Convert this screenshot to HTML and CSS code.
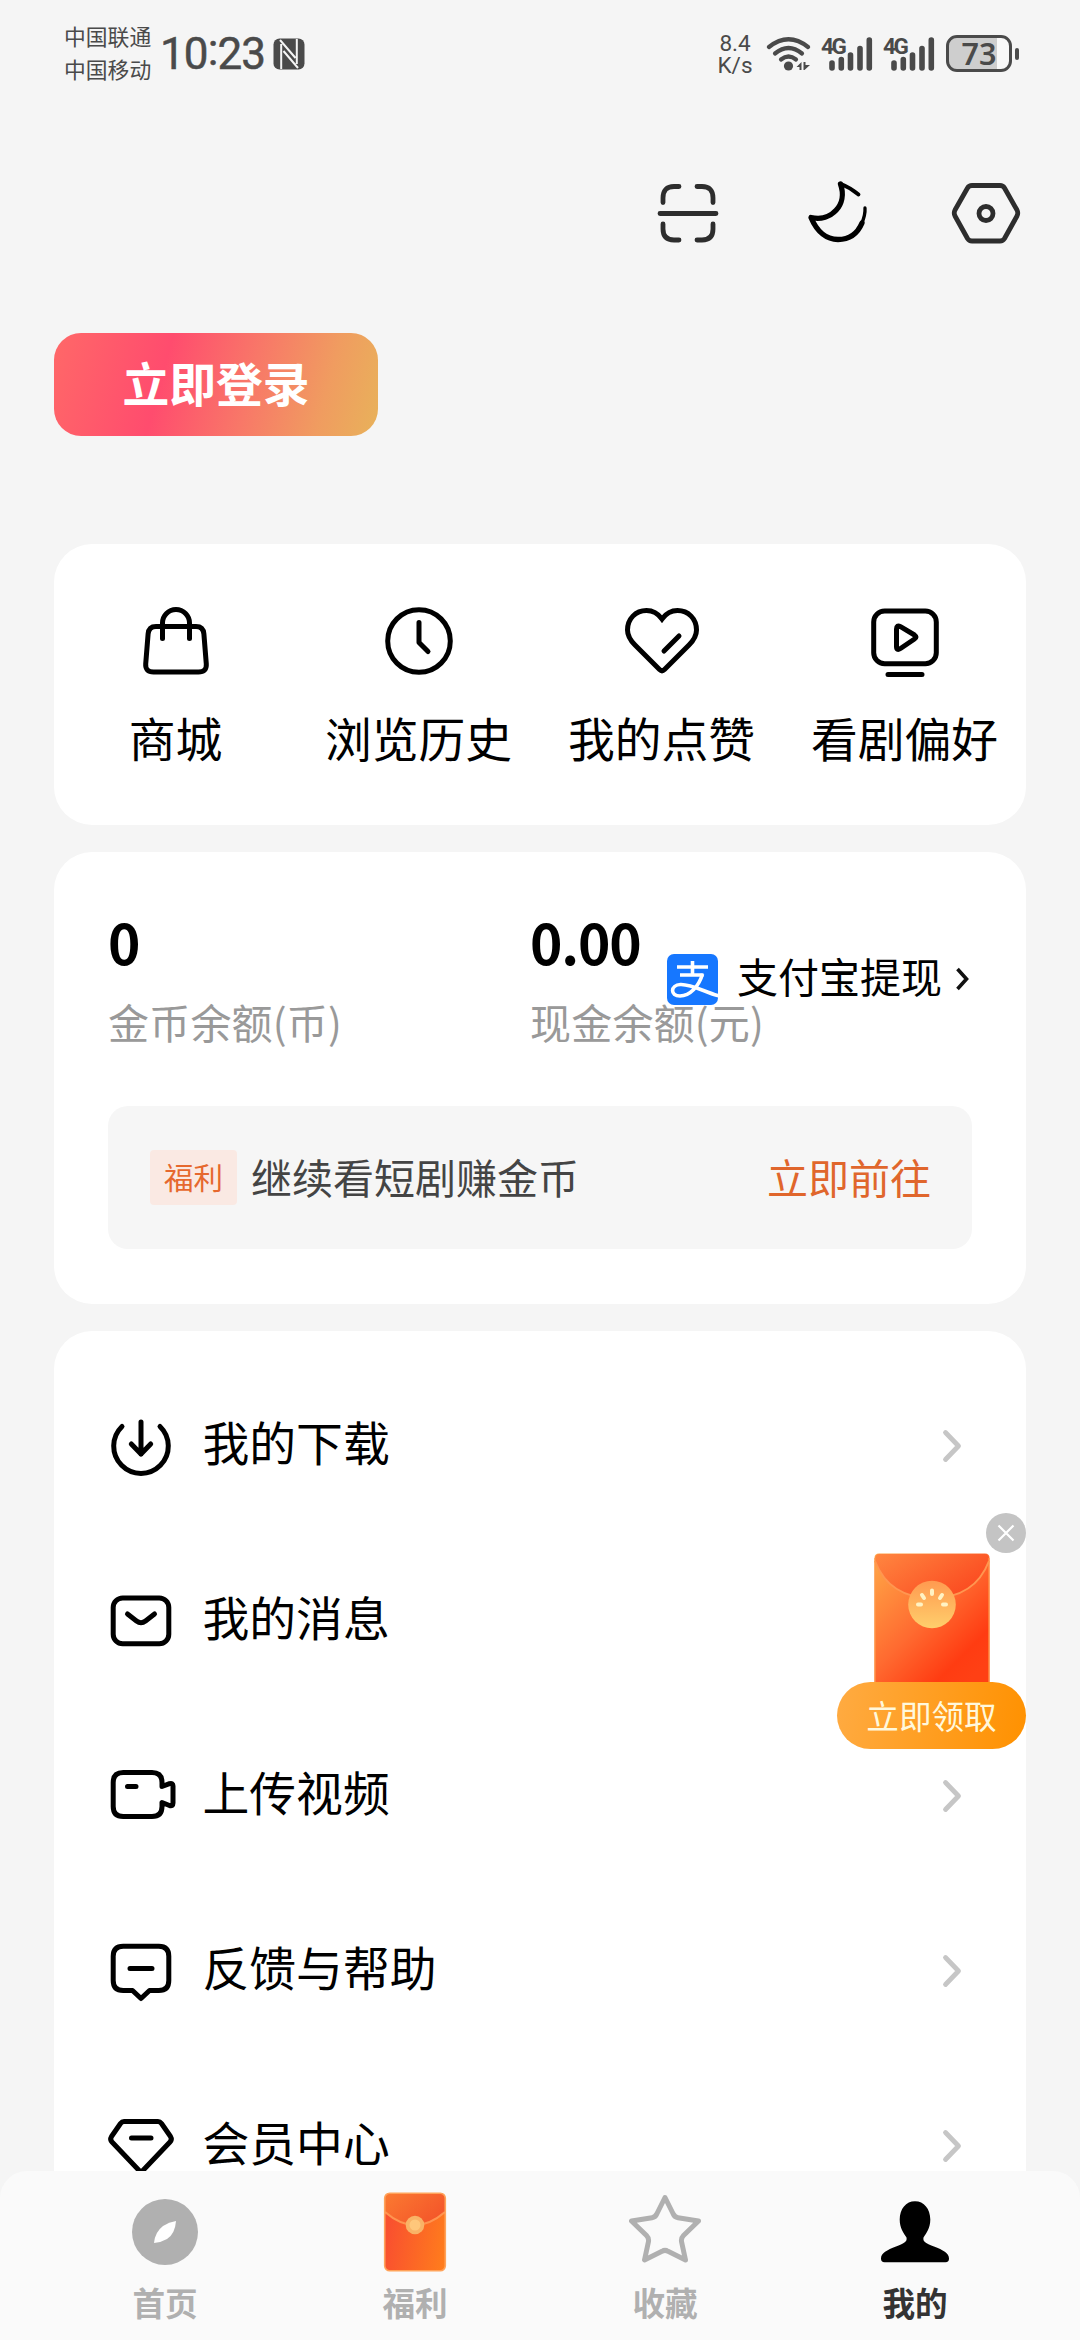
FILE: index.html
```html
<!DOCTYPE html>
<html lang="zh-CN">
<head>
<meta charset="utf-8">
<title>我的</title>
<link rel="stylesheet" href="styles.css">
</head>
<body>
<div class="screen">
  <header class="status">
    <div class="carriers"><span>中国联通</span><span>中国移动</span></div>
    <div class="clock">10<span class="colon">:</span>23</div>
    <svg class="nfc" viewBox="0 0 32 32"><rect x=".5" y=".5" width="31" height="31" rx="6" fill="#4a4a4a"/><path d="M7 2L22.500 20M10.500 13L25 30M8.200 6V31M23.800 1V26" fill="none" stroke="#f5f5f5" stroke-width="2"/></svg>
    <div class="speed"><span>8.4</span><span>K/s</span></div>
    <svg class="wifi" viewBox="0 0 46 34"><g fill="none" stroke="#4a4a4a" stroke-width="4.200" stroke-linecap="round"><path d="M3 10Q22.500 -5.500 42 10"/><path d="M9 16.500Q22.500 5.500 36 16.500"/><path d="M15 22.500Q22.500 16.500 30 22.500"/></g><circle cx="22.500" cy="29" r="4.600" fill="#4a4a4a"/><path d="M30.500 30L35.500 25V33H33.500V30ZM37.500 25H39.500V28H44L38.500 33H37.500Z" fill="#4a4a4a"/></svg>
    <div class="signal"><span class="net">4G</span><svg viewBox="0 0 44 34"><path d="M3 26V31M12.300 22.500V31M21.500 18V31M31 11.500V31M40.300 3V31" stroke="#4a4a4a" stroke-width="5.600" stroke-linecap="round"/></svg></div>
    <div class="signal"><span class="net">4G</span><svg viewBox="0 0 44 34"><path d="M3 26V31M12.300 22.500V31M21.500 18V31M31 11.500V31M40.300 3V31" stroke="#4a4a4a" stroke-width="5.600" stroke-linecap="round"/></svg></div>
    <div class="battery">73</div>
    <div class="battery-tip"></div>
  </header>

  <div class="tools">
    <svg class="icon" viewBox="-36 -36 72 72" stroke="#333"><path d="M-28 .5H28M-25 -10.500V-15Q-25 -26.500 -14 -26.500H-9M25 -10.500V-15Q25 -26.500 14 -26.500H9M-25 11V16Q-25 27 -14 27H-9M25 11V16Q25 27 14 27H9"/></svg>
    <svg class="icon" viewBox="-36 -36 72 72"><path d="M4 -29Q13 -25.500 21.500 -18.500" stroke-width="3.800"/><path d="M3.500 -29C11 -8 -6 9 -26 4.500C-20 19 -10 26.500 1 26.500C13 26.500 21 19.500 25 10" stroke-width="5.300"/><path d="M24.500 11Q28.500 2 28 -5" stroke-width="3.300"/></svg>
    <svg class="icon" viewBox="-36 -36 72 72" stroke="#292929"><path d="M-14 -27.500H14Q17 -27.500 18.500 -25L31 -3Q32.500 0 31 3L18.500 25.500Q17 28 14 28H-14Q-17 28 -18.500 25.500L-31 3Q-32.500 0 -31 -3L-18.500 -25Q-17 -27.500 -14 -27.500Z"/><circle cy=".5" r="7"/></svg>
  </div>

  <button class="login">立即登录</button>

  <main class="content">
    <section class="card shortcuts">
      <div class="shortcut"><svg class="icon" viewBox="-36 -36 72 72"><path d="M-13.500 -2.500V-18A13.500 13.500 0 0 1 13.500 -18V-2.500M-20 -14.500H20Q27.300 -14.500 27.900 -7L30.300 23Q30.800 31 22.500 31H-22.500Q-30.800 31 -30.300 23L-27.900 -7Q-27.300 -14.500 -20 -14.500Z"/></svg><span>商城</span></div>
      <div class="shortcut"><svg class="icon" viewBox="-36 -36 72 72"><circle r="31.300"/><path d="M0 -18.500V1.500L9 10.500"/></svg><span>浏览历史</span></div>
      <div class="shortcut"><svg class="icon heart" viewBox="-36 -36 72 72"><path stroke-linejoin="miter" d="M0 -22C-4 -27.500 -9.500 -30.500 -15.500 -30.500C-26.500 -30.500 -34.500 -22 -34.500 -11C-34.500 -4 -31 0 -27 4L-2.500 28.500Q0 31 2.500 28.500L27 4C31 0 34.500 -4 34.500 -11C34.500 -22 26.500 -30.500 15.500 -30.500C9.500 -30.500 4 -27.500 0 -22Z"/><path d="M2 10L17 -5"/></svg><span>我的点赞</span></div>
      <div class="shortcut"><svg class="icon" viewBox="-36 -36 72 72"><rect x="-31.300" y="-30" width="62.600" height="52.700" rx="11"/><path d="M-8.500 -12Q-8.500 -16.500 -4.500 -14.300L9.500 -6Q12.500 -4 9.500 -2L-4.500 7.500Q-8.500 10 -8.500 5.500ZM-17 33.500H17"/></svg><span>看剧偏好</span></div>
    </section>

    <section class="card wallet">
      <div class="balances">
        <div class="balance"><strong>0</strong><span>金币余额(币)</span></div>
        <div class="balance"><strong>0.00</strong><span>现金余额(元)</span></div>
        <div class="withdraw">
          <svg class="alipay" viewBox="0 0 51 51"><rect width="51" height="51" rx="7" fill="#1677ff"/><g fill="none" stroke="#fff" stroke-width="3.600"><path d="M10 13H41M25.500 7V21M13 21H36.500"/><path d="M35.500 20C32 32 23 42 13 42C3 42 3 31 13.500 30.500C24 30 38 38 52 42"/></g></svg>
          <span>支付宝提现</span>
          <svg class="go" viewBox="-8 -14 16 28"><path d="M-4.500 -10L4.500 0L-4.500 10"/></svg>
        </div>
      </div>
      <div class="promo"><span class="tag">福利</span><span class="promo-text">继续看短剧赚金币</span><span class="promo-link">立即前往</span></div>
    </section>

    <section class="card menu">
      <div class="row"><svg class="icon" viewBox="-36 -36 72 72"><path d="M-19 -19.500A27.300 27.300 0 1 0 19 -19.500M0 -24V8M-9.700 -2L0 8L9.700 -2"/></svg><span>我的下载</span><svg class="arrow" viewBox="-12 -18 24 36"><path d="M-6.500 -13.500L6.500 0L-6.500 13.500"/></svg></div>
      <div class="row"><svg class="icon" viewBox="-36 -36 72 72"><rect x="-27.800" y="-23" width="55.600" height="45.700" rx="9.500"/><path d="M-13.500 -7L-4.500 0Q0 3.500 4.500 0L13.500 -7"/></svg><span>我的消息</span><svg class="arrow" viewBox="-12 -18 24 36"><path d="M-6.500 -13.500L6.500 0L-6.500 13.500"/></svg></div>
      <div class="row"><svg class="icon" viewBox="-36 -36 72 72"><path d="M-17.800 -23.500H11Q21 -23.500 21 -13.500V-9.500L28.500 -12.300Q32 -13.300 32 -10V7Q32 10.500 28.500 9.500L21 6.500V10.500Q21 20.500 11 20.500H-17.800Q-27.800 20.500 -27.800 10.500V-13.500Q-27.800 -23.500 -17.800 -23.500ZM-13.500 -9.500H-5"/></svg><span>上传视频</span><svg class="arrow" viewBox="-12 -18 24 36"><path d="M-6.500 -13.500L6.500 0L-6.500 13.500"/></svg></div>
      <div class="row"><svg class="icon" viewBox="-36 -36 72 72"><path d="M-17.800 -24.700H17.800Q27.800 -24.700 27.800 -14.700V9.500Q27.800 19.500 17.800 19.500H8.500L0 27.500L-8.500 19.500H-17.800Q-27.800 19.500 -27.800 9.500V-14.700Q-27.800 -24.700 -17.800 -24.700ZM-11 -2.500H11"/></svg><span>反馈与帮助</span><svg class="arrow" viewBox="-12 -18 24 36"><path d="M-6.500 -13.500L6.500 0L-6.500 13.500"/></svg></div>
      <div class="row"><svg class="icon" viewBox="-36 -36 72 72"><path d="M-17 -24.500H17Q19 -24.500 20.500 -22.500L29.500 -9.500Q31.300 -6.500 29 -4L0 26.500L-29 -4Q-31.300 -6.500 -29.500 -9.500L-20.500 -22.500Q-19 -24.500 -17 -24.500ZM-9.500 -8H10"/></svg><span>会员中心</span><svg class="arrow" viewBox="-12 -18 24 36"><path d="M-6.500 -13.500L6.500 0L-6.500 13.500"/></svg></div>
    </section>
  </main>

  <nav class="tabs">
    <div class="tab"><svg viewBox="-36 -42 72 84"><circle r="33" fill="#b0b0b0"/><path d="M11 -11Q10 2 2 7Q-4 10.500 -11 11Q-10 0 -2 -6Q4 -10 11 -11Z" fill="#fff"/></svg><span>首页</span></div>
    <div class="tab"><svg viewBox="-36 -42 72 84"><defs><linearGradient id="packet" x1="0" y1=".7" x2="1" y2=".9"><stop stop-color="#f9502f"/><stop offset="1" stop-color="#ff7d1c"/></linearGradient><linearGradient id="lid" x1="0" y1="0" x2="1" y2=".6"><stop stop-color="#fb7a31"/><stop offset="1" stop-color="#f4572a"/></linearGradient></defs><rect x="-30.300" y="-38.800" width="60.600" height="77.600" rx="5" fill="url(#packet)"/><path d="M-30 -20V-34Q-30 -39 -25 -39H25Q30 -39 30 -34V-20Q0 4 -30 -20Z" fill="url(#lid)"/><path d="M-30 -20Q0 6 30 -20" fill="none" stroke="#ff944f" stroke-width="2.200"/><rect x="-30.300" y="-38.800" width="60.600" height="77.600" rx="5" fill="none" stroke="#ffa35a" stroke-width="1.600"/><circle cy="-7" r="9.300" fill="#f9b366"/><circle cy="-7" r="5.500" fill="#ffc77b"/></svg><span>福利</span></div>
    <div class="tab"><svg viewBox="-36 -42 72 84"><path d="M0 -34.500L8 -18.500Q9.500 -14.800 13 -14.300L33.500 -11L18.500 3.500Q16 6 16.500 9.500L20.500 28L3 19.300Q0 17.500 -3 19.300L-20.500 28L-16.500 9.500Q-16 6 -18.500 3.500L-33.500 -11L-13 -14.300Q-9.500 -14.800 -8 -18.500Z" fill="none" stroke="#b0b0b0" stroke-width="5" stroke-linejoin="round"/></svg><span>收藏</span></div>
    <div class="tab active"><svg viewBox="-36 -42 72 84"><path d="M0 -30.700C9 -30.700 15.300 -23 15.300 -12.500C15.300 -4 11.500 1 8.500 5.500C7.500 10 11.500 11.500 19 14.500C28 18 34 21 34 26.500Q34 30.300 30.500 30.300H-30.500Q-34 30.300 -34 26.500C-34 21 -28 18 -19 14.500C-11.500 11.500 -7.500 10 -8.500 5.500C-11.500 1 -15.300 -4 -15.300 -12.500C-15.300 -23 -9 -30.700 0 -30.700Z"/></svg><span>我的</span></div>
  </nav>

  <aside class="bonus">
    <svg class="bonus-close" viewBox="-20 -20 40 40"><circle r="20" fill="#c4c4c4"/><path d="M-7.500 -7.500L7.500 7.500M7.500 -7.500L-7.500 7.500" stroke="#fff" stroke-width="2.200"/></svg>
    <svg class="bonus-packet" viewBox="0 0 116 130"><defs><linearGradient id="body" x1="0" y1=".1" x2=".8" y2="1"><stop stop-color="#ffa245"/><stop offset=".5" stop-color="#ff6a30"/><stop offset=".85" stop-color="#ff3c12"/><stop offset="1" stop-color="#ff4014"/></linearGradient><linearGradient id="flap" x1="0" y1="0" x2="1" y2=".6"><stop stop-color="#ff8640"/><stop offset="1" stop-color="#fb4a20"/></linearGradient><linearGradient id="coin" x1="0" y1="0" x2="0" y2="1"><stop stop-color="#ff9a50"/><stop offset="1" stop-color="#ffcf6c"/></linearGradient></defs><path d="M.5 130V5Q.5 .5 5 .5H111Q115.500 .5 115.500 5V130Z" fill="url(#body)"/><path d="M1 8Q1 1 5 1H111Q115 1 115 8C105 34 84 45 58 45S11 34 1 8Z" fill="url(#flap)"/><path d="M1 8C11 34 32 45 58 45S105 34 115 8" fill="none" stroke="#ff9650" stroke-width="2"/><path d="M1 130V5M115 130V5" stroke="#ff9a4a" stroke-width="1.200"/><circle cx="58" cy="51.500" r="23.800" fill="url(#coin)"/><path d="M44 51.500H47M48 42L50 45M58 37.500V41M68 42L66 45M69 51.500H72" stroke="#fff3c4" stroke-width="4" stroke-linecap="round"/></svg>
    <div class="bonus-cta">立即领取</div>
  </aside>
</div>
</body>
</html>
```
FILE: styles.css
```css
* { box-sizing: border-box; }

body {
  margin: 0;
  background: #f5f5f5;
  color: #000;
  font-family: "Noto Sans CJK SC", "Noto Sans", sans-serif;
}

.screen {
  position: relative;
  display: flex;
  flex-direction: column;
  width: 1080px;
  height: 2340px;
  overflow: hidden;
}

/* Line icons share a centred 72px canvas */
.icon {
  flex: none;
  width: 72px;
  height: 72px;
  fill: none;
  stroke: #000;
  stroke-width: 5;
  stroke-linecap: round;
  stroke-linejoin: round;
}
.icon[stroke] { stroke: #2d2d2d; stroke-width: 4.8; }
.icon.heart { overflow: visible; }

/* Status bar */
.status {
  display: flex;
  flex: none;
  align-items: center;
  height: 107px;
  padding-left: 64px;
  color: #4a4a4a;
}
.carriers, .speed { display: flex; flex-direction: column; }
.carriers { width: 96px; padding-bottom: 4px; font-size: 21.8px; line-height: 33px; }
.clock {
  width: 113px;
  font: 400 44px/60px Roboto, sans-serif;
  letter-spacing: -0.9px;
  -webkit-text-stroke: 0.5px #4a4a4a;
}
.colon { vertical-align: 4px; line-height: 1; }
.nfc { flex: none; width: 32px; height: 32px; margin-right: 406px; }
.speed {
  align-items: center;
  width: 48px;
  margin-right: 7px;
  font: 22.5px/22px Roboto, sans-serif;
}
.wifi { flex: none; width: 46px; height: 34px; margin-right: 10px; }
.signal { position: relative; flex: none; width: 62px; height: 34px; }
.signal svg { display: block; width: 44px; height: 34px; margin-left: 7px; }
.net {
  position: absolute;
  top: -2px;
  left: -1px;
  font: 700 22.5px/22px Roboto, sans-serif;
  letter-spacing: -2.4px;
}
.battery {
  flex: none;
  width: 66px;
  height: 37px;
  border: 3px solid #4a4a4a;
  border-radius: 11px;
  background: linear-gradient(90deg, #cecece 80%, #f8f8f8 80%);
  background-clip: padding-box;
  font: 600 30.5px/31px "Noto Sans", sans-serif;
  text-align: center;
}
.battery-tip {
  width: 4px;
  height: 12px;
  margin-left: 3px;
  border-radius: 2px;
  background: #4a4a4a;
}

.tools {
  display: flex;
  flex: none;
  justify-content: flex-end;
  gap: 77px;
  margin-top: 70px;
  padding-right: 58px;
}

.login {
  flex: none;
  width: 324px;
  height: 103px;
  margin: 84px 0 0 54px;
  padding: 0 0 5px;
  border: 0;
  border-radius: 27px;
  background: linear-gradient(105deg, #ff6868 0%, #ff4c6e 34%, #f87868 60%, #f09c60 82%, #e8b25a 100%);
  color: #fff;
  font: 700 46.8px/60px "Noto Sans CJK SC", sans-serif;
}

/* The last menu row runs on beneath the tab bar */
.content {
  display: flex;
  flex: 1;
  flex-direction: column;
  gap: 27px;
  min-height: 0;
  margin-top: 108px;
  padding: 0 54px;
}
.card { flex: none; border-radius: 38px; background: #fff; }

.shortcuts {
  display: grid;
  grid-template-columns: repeat(4, 1fr);
  height: 281px;
  padding-top: 61px;
}
.shortcut {
  display: flex;
  flex-direction: column;
  align-items: center;
  gap: 30px;
  font-size: 46.8px;
  line-height: 60px;
}

/* Wallet */
.wallet { height: 452px; padding: 57px 54px 0; }
.balances { position: relative; display: flex; height: 197px; }
.balance { display: flex; flex-direction: column; width: 422px; }
.balance strong { font-size: 55px; line-height: 64px; letter-spacing: -1.2px; }
.balance span { margin-top: 21px; color: #999; font-size: 41px; line-height: 54px; letter-spacing: 0.2px; }
.withdraw {
  position: absolute;
  top: 42px;
  left: 559px;
  display: flex;
  align-items: center;
  height: 56px;
  font-size: 41px;
  line-height: 56px;
  white-space: nowrap;
}
.withdraw span { margin-top: -8px; }
.alipay { width: 51px; height: 51px; margin-right: 19px; }
.go {
  width: 16px;
  height: 28px;
  margin-left: 12px;
  fill: none;
  stroke: #111;
  stroke-width: 3.6;
}
.promo {
  display: flex;
  align-items: center;
  height: 143px;
  padding: 0 41px 0 42px;
  border-radius: 20px;
  background: #f6f6f6;
  font-size: 41px;
}
.tag {
  width: 87px;
  height: 55px;
  margin-right: 14px;
  border-radius: 4px;
  background: #fae9e3;
  color: #e6682e;
  font-size: 29.5px;
  line-height: 52px;
  text-align: center;
}
.promo-text { margin-top: -4px; color: #444; }
.promo-link { margin: -4px 0 0 auto; color: #e0662c; }

/* Menu */
.menu { padding-top: 27px; }
.row {
  display: flex;
  align-items: center;
  height: 175px;
  padding: 0 62px 0 51px;
  font-size: 46.8px;
  line-height: 52px;
}
.row span { margin: -9px auto 0 25.5px; }
.arrow {
  width: 24px;
  height: 36px;
  fill: none;
  stroke: #c6c6c6;
  stroke-width: 4.8;
  stroke-linecap: round;
  stroke-linejoin: round;
}

/* Bottom tabs */
.tabs {
  position: relative;
  display: flex;
  flex: none;
  height: 169px;
  padding: 19px 40px 0;
  border-radius: 27px 27px 0 0;
  background: #fafafa;
}
.tab {
  display: flex;
  flex: 1;
  flex-direction: column;
  align-items: center;
  gap: 8px;
  color: #b0b0b0;
  font-size: 32.6px;
  font-weight: 700;
  line-height: 40px;
}
.tab svg { width: 72px; height: 84px; }
.tab.active { color: #333; }

/* Floating bonus */
.bonus {
  position: absolute;
  top: 1513px;
  right: 54px;
  display: flex;
  flex-direction: column;
  align-items: flex-end;
  width: 189px;
}
.bonus-close { width: 40px; height: 40px; }
.bonus-packet { width: 116px; height: 130px; margin-right: 36px; }
.bonus-cta {
  width: 189px;
  height: 67px;
  margin-top: -1px;
  border-radius: 34px;
  background: linear-gradient(100deg, #ffab42, #ff9100);
  color: #fff8dc;
  font-size: 32.6px;
  line-height: 65px;
  text-align: center;
}
```
